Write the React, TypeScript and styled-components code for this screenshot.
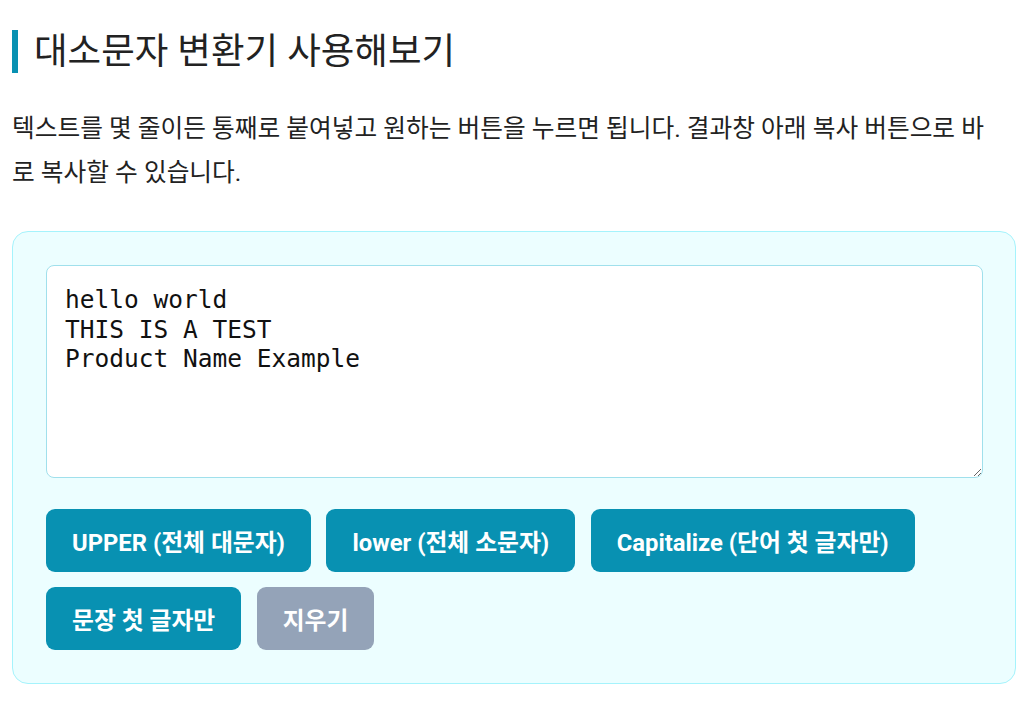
import React, { useState } from 'react';
import styled, { createGlobalStyle } from 'styled-components';

const GlobalStyle = createGlobalStyle`
  html, body {
    margin: 0;
    padding: 0;
    background: #ffffff;
  }
  body {
    font-family: Roboto, "Noto Sans CJK KR", sans-serif;
    color: #222222;
  }
`;

const Page = styled.main`
  padding: 30px 9px 20px 12px;
`;

const Heading = styled.h2`
  margin: 0;
  padding-left: 16px;
  border-left: 6px solid #0891b2;
  font-family: Roboto, "Noto Sans CJK KR", sans-serif;
  font-size: 36.5px;
  font-weight: 400;
  line-height: 43px;
  color: #222222;
`;

const Intro = styled.p`
  margin: 34px 0 36px;
  padding-right: 22px;
  font-size: 24.7px;
  line-height: 44px;
  color: #222222;
  word-break: break-all;
`;

const Panel = styled.section`
  background: #ecfeff;
  border: 1.5px solid #a5f3fc;
  border-radius: 16px;
  padding: 33px 32px 33px 33px;
`;

const Editor = styled.textarea`
  display: block;
  box-sizing: border-box;
  width: 100%;
  height: 213px;
  padding: 19px 18px 17px;
  border: 1.5px solid #a0e0ec;
  border-radius: 8px;
  background: #ffffff;
  font-family: "DejaVu Sans Mono", monospace;
  font-size: 24.5px;
  line-height: 29.5px;
  color: #111111;
  resize: vertical;
  outline: none;
`;

const Actions = styled.div`
  display: flex;
  flex-wrap: wrap;
  gap: 15px 15.5px;
  margin-top: 31px;
`;

const ActionButton = styled.button<{ $muted?: boolean }>`
  height: 63px;
  padding: 0 26px;
  border: none;
  border-radius: 9px;
  background: ${(p) => (p.$muted ? '#94a3b8' : '#0891b2')};
  color: #ffffff;
  font-family: Roboto, "Noto Sans CJK KR", sans-serif;
  font-size: 23.8px;
  font-weight: 700;
  cursor: pointer;
`;

const initial = 'hello world\nTHIS IS A TEST\nProduct Name Example';

export default function App() {
  const [text, setText] = useState(initial);

  const toUpper = () => setText(text.toUpperCase());
  const toLower = () => setText(text.toLowerCase());
  const capitalize = () =>
    setText(text.toLowerCase().replace(/\b\w/g, (c) => c.toUpperCase()));
  const sentence = () =>
    setText(
      text
        .toLowerCase()
        .replace(/(^\s*\w|[.!?]\s*\w)/gm, (c) => c.toUpperCase())
    );

  return (
    <Page>
      <GlobalStyle />
      <Heading>대소문자 변환기 사용해보기</Heading>
      <Intro>
        텍스트를 몇 줄이든 통째로 붙여넣고 원하는 버튼을 누르면 됩니다. 결과창
        아래 복사 버튼으로 바로 복사할 수 있습니다.
      </Intro>
      <Panel>
        <Editor
          value={text}
          onChange={(e) => setText(e.target.value)}
          spellCheck={false}
        />
        <Actions>
          <ActionButton onClick={toUpper}>UPPER (전체 대문자)</ActionButton>
          <ActionButton onClick={toLower}>lower (전체 소문자)</ActionButton>
          <ActionButton onClick={capitalize}>
            Capitalize (단어 첫 글자만)
          </ActionButton>
          <ActionButton onClick={sentence}>문장 첫 글자만</ActionButton>
          <ActionButton $muted onClick={() => setText('')}>
            지우기
          </ActionButton>
        </Actions>
      </Panel>
    </Page>
  );
}
